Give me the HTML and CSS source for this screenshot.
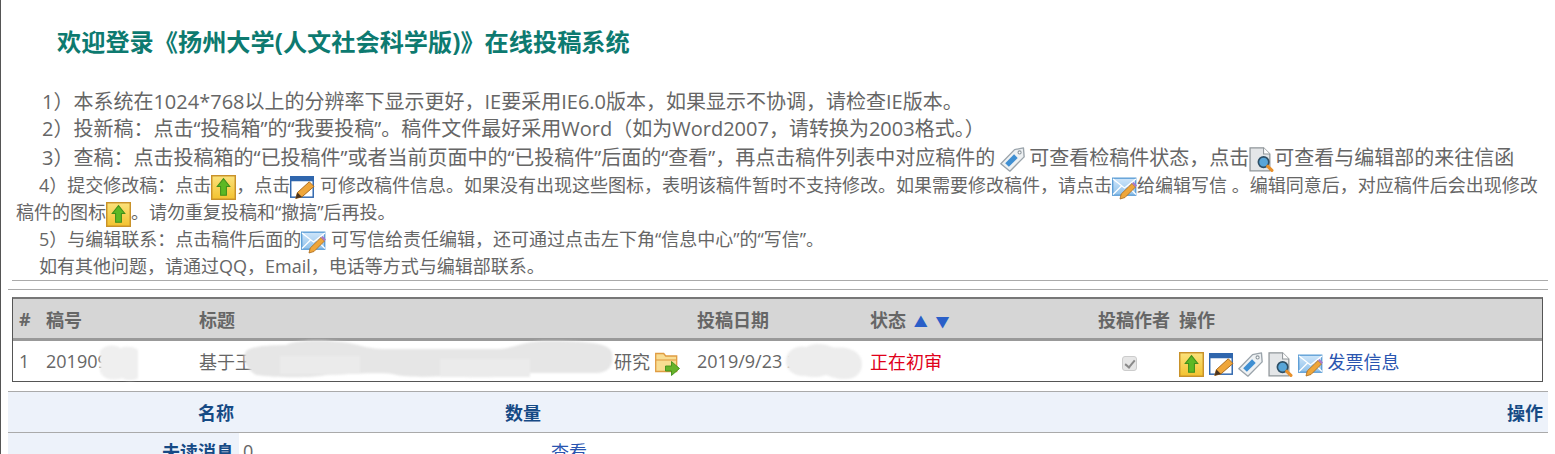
FILE: index.html
```html
<!DOCTYPE html>
<html lang="zh-CN">
<head>
<meta charset="UTF-8" />
<title>在线投稿系统</title>
<link rel="stylesheet" href="styles.css">
</head>
<body>
<svg class="defs" width="0" height="0">
  <defs>
    <linearGradient id="gold" x1="0" y1="0" x2="0" y2="1">
      <stop offset="0" stop-color="#fbe27c"/><stop offset="1" stop-color="#f3c22f"/>
    </linearGradient>
    <linearGradient id="sky" x1="0" y1="0" x2="0" y2="1">
      <stop offset="0" stop-color="#cfe6fa"/><stop offset="1" stop-color="#8fc1ea"/>
    </linearGradient>
    <symbol id="i-up" viewBox="0 0 24 24">
      <rect x="0.7" y="0.7" width="22.6" height="22.6" fill="url(#gold)" stroke="#c9922a" stroke-width="1.4"/>
      <path d="M12 3.5l6 7.5h-3.2v8.5H9.2V11H6z" fill="#5cb824" stroke="#3f8f1a" stroke-width="1"/>
    </symbol>
    <symbol id="i-edit" viewBox="0 0 24 24">
      <rect x="0.7" y="1.7" width="21.6" height="19.6" fill="#fff" stroke="#2f66ad" stroke-width="1.4"/>
      <rect x="0" y="1" width="23" height="5" fill="#2f66ad"/>
      <path d="M5.5 22.5l1.6-5.6L18.5 6.5l4.5 4.5L11.5 21z" fill="#efa63a" stroke="#a9691c" stroke-width="0.9"/>
      <path d="M5.5 22.5l1.6-5.6 4.4 4.100z" fill="#4a3420"/>
    </symbol>
    <symbol id="i-tag" viewBox="0 0 24 24">
      <path d="M0.8 16L14 2.500l8.500-1.700L23.200 9.500 9.500 23.200z" fill="#eef1f3" stroke="#9aa3aa" stroke-width="1.300" stroke-linejoin="round"/>
      <path d="M5 15.500L13.500 7l3.500 3.500-8.500 8.500z" fill="#3f8fd2"/>
      <circle cx="18.800" cy="5.200" r="1.500" fill="#fff" stroke="#8a949b"/>
    </symbol>
    <symbol id="i-doc" viewBox="0 0 24 24">
      <path d="M1 0.800h13l6 6v16H1z" fill="#e4e6e8" stroke="#8f9599" stroke-width="1.200"/>
      <path d="M14 0.800v6h6" fill="#fff" stroke="#8f9599"/>
      <circle cx="14" cy="14.500" r="5" fill="#58a5d8" stroke="#2d4f66" stroke-width="1.600"/>
      <path d="M18 18.500l4 4" stroke="#e8902a" stroke-width="3" stroke-linecap="round"/>
    </symbol>
    <symbol id="i-mail" viewBox="0 0 25 24">
      <rect x="0.700" y="2.700" width="23" height="17" fill="url(#sky)" stroke="#5f9fd6" stroke-width="1.400"/>
      <path d="M1 3.500l11.500 9 11.500-9M1 19l8.500-8.500M24 19l-8-8" fill="none" stroke="#fff" stroke-width="1.300"/>
      <path d="M8 23.500l1.200-5L20 8l3.500 3.500L13 22z" fill="#efa63a" stroke="#a9691c" stroke-width="0.800"/>
      <path d="M20 8l1.500-1.500L25 10l-1.500 1.500z" fill="#a878c8"/>
    </symbol>
    <symbol id="i-folder" viewBox="0 0 25 24">
      <path d="M0.700 1h8l2 2.500h11V19H0.700z" fill="#f9dd92" stroke="#e09c42" stroke-width="1.300"/>
      <path d="M0.700 7.500h21" stroke="#e09c42" stroke-width="1.100"/>
      <path d="M10.500 13.500h6V9l8 7-8 7v-4.500h-6z" fill="#66b32a" stroke="#3f8f1a" stroke-width="0.900"/>
    </symbol>
  </defs>
</svg>

<div class="page">
  <h1 class="welcome">欢迎登录《扬州大学(人文社会科学版)》在线投稿系统</h1>

  <div class="notes">
    <p class="note n-1">1）本系统在1024*768以上的分辨率下显示更好，IE要采用IE6.0版本，如果显示不协调，请检查IE版本。</p>
    <p class="note n-1">2）投新稿：点击“投稿箱”的“我要投稿”。稿件文件最好采用Word（如为Word2007，请转换为2003格式。）</p>
    <p class="note n-1 n-tall">3）查稿：点击投稿箱的“已投稿件”或者当前页面中的“已投稿件”后面的“查看”，再点击稿件列表中对应稿件的<svg class="ic ic-gap"><use href="#i-tag"/></svg>可查看检稿件状态，点击<svg class="ic"><use href="#i-doc"/></svg>可查看与编辑部的来往信函</p>
    <p class="note n-2 n-step">4）提交修改稿：点击<svg class="ic"><use href="#i-up"/></svg>，点击<svg class="ic"><use href="#i-edit"/></svg> 可修改稿件信息。如果没有出现这些图标，表明该稿件暂时不支持修改。如果需要修改稿件，请点击<svg class="ic"><use href="#i-mail"/></svg>给编辑写信 。编辑同意后，对应稿件后会出现修改稿件的图标<svg class="ic"><use href="#i-up"/></svg>。请勿重复投稿和“撤搞”后再投。</p>
    <p class="note n-2">5）与编辑联系：点击稿件后面的<svg class="ic"><use href="#i-mail"/></svg> 可写信给责任编辑，还可通过点击左下角“信息中心”的“写信”。</p>
    <p class="note n-2">如有其他问题，请通过QQ，Email，电话等方式与编辑部联系。</p>
  </div>

  <hr class="rule rule-short">
  <hr class="rule">

  <div class="papers-wrap">
    <table class="papers">
      <thead>
        <tr>
          <th class="c-num">#</th>
          <th class="c-id">稿号</th>
          <th class="c-title">标题</th>
          <th class="c-date">投稿日期</th>
          <th class="c-state">状态 <span class="sort">▲</span> <span class="sort">▼</span></th>
          <th class="c-author">投稿作者</th>
          <th>操作</th>
        </tr>
      </thead>
      <tbody>
        <tr>
          <td>1</td>
          <td>201909</td>
          <td><span class="hidden-part">基于王</span>研究 <svg class="ic"><use href="#i-folder"/></svg></td>
          <td>2019/9/23 2</td>
          <td class="state">正在初审</td>
          <td class="center"><input class="check" type="checkbox" checked disabled></td>
          <td class="actions">
            <svg class="ic"><use href="#i-up"/></svg>
            <svg class="ic"><use href="#i-edit"/></svg>
            <svg class="ic"><use href="#i-tag"/></svg>
            <svg class="ic"><use href="#i-doc"/></svg>
            <svg class="ic"><use href="#i-mail"/></svg>
            <a href="#">发票信息</a>
          </td>
        </tr>
      </tbody>
    </table>
    <!-- smudges over the row, coordinates are page pixels -->
    <svg class="smudges" viewBox="12 298 1531 86">
      <path d="M100 352c5-6 14-7 20-3 6-2 14-2 18 2v28c-4 3-12 3-16 0-8 3-18 2-22-6z" fill="#efefef"/>
      <path d="M246 352c6-5 24-6 40-6 10-6 50-6 72 0 16 5 30 4 50 4h90c16 0 22-8 50-8 40 0 62 2 64 12 2 14-4 20-18 20h-70c-14 5-50 5-76 3-16 1-40 2-56-2-20-2-50 1-66 1-12 3-50 3-70 0-12-8-14-18-10-24z" fill="#e6e6e6"/>
      <path d="M280 357h80v18h-80zM440 360h90v18h-90z" fill="#ebebeb"/>
      <path d="M786 362c0-10 10-16 20-14 6-4 18-4 26 0 4 1 10 0 14 1 10 2 16 8 16 16 0 10-8 16-18 15-8 0-12-2-18-4-4 2-14 3-20 1-12 1-20-6-20-15z" fill="#ededed"/>
    </svg>
  </div>

  <table class="msgs">
    <thead>
      <tr><th class="m-name">名称</th><th class="m-count">数量</th><th>操作</th></tr>
    </thead>
    <tbody>
      <tr><td class="m-label">未读消息</td><td class="m-num">0</td><td><a href="#">查看</a></td></tr>
    </tbody>
  </table>
</div>
</body>
</html>
```

FILE: styles.css
```css
html, body {
  margin: 0;
  height: 100%;
  overflow: hidden;
  background: #fff;
}
body {
  font-family: "Open Sans", "Noto Sans CJK SC", sans-serif;
  color: #666;
}
.defs {
  display: block;
  height: 0;
}
.page {
  height: 454px;
  overflow: hidden;
  border-left: 1px solid #555;
  padding: 0 7px 0 7px;
}
.welcome {
  margin: 0;
  padding: 26px 0 0 49px;
  font-size: 24.2px;
  line-height: 32px;
  color: #0d7a70;
}
.notes {
  margin-top: 30px;
  padding: 0 7px 0 8px;
  font-size: 20px;
}
.note {
  margin: 0;
  line-height: 27px;
}
.n-1 { text-indent: 26px; }
.n-2 {
  text-indent: 23px;
  font-size: 18px;
}
.n-tall { padding-top: 2px; }
.n-step { padding-top: 1px; }
.ic {
  width: 25px;
  height: 25px;
  vertical-align: middle;
  margin: -4px 0;
}
.ic-gap { margin: -4px 4px -4px 5px; }
.rule {
  margin: 0;
  height: 0;
  border: 0;
  border-top: 1px solid #aaa;
}
.rule-short {
  margin: 0 0 8px 4px;
}
.papers-wrap {
  position: relative;
  margin: 7px 5px 0 4px;
}
.smudges {
  position: absolute;
  left: 0;
  top: 0;
  width: 100%;
  height: 86px;
  filter: blur(1px);
}
.papers {
  width: 100%;
  table-layout: fixed;
  border-collapse: separate;
  border-spacing: 0;
  font-size: 18px;
  border: 1px solid #555;
  border-top: 2px solid #777;
  border-bottom: 1px solid #555;
}
.papers th {
  height: 39px;
  padding: 0 0 0 6px;
  background: #d6d6d6;
  border-bottom: 3px solid #999;
  text-align: left;
  font-weight: bold;
  white-space: nowrap;
}
.papers td {
  height: 40px;
  padding: 0 0 0 6px;
  white-space: nowrap;
}
.c-num { width: 21px; }
.c-id { width: 147px; }
.c-title { width: 492px; }
.c-date { width: 167px; }
.c-state { width: 222px; }
.c-author { width: 75px; }
.sort {
  margin-left: 3px;
  color: #2a5fc8;
  font-size: 14px;
}
.hidden-part {
  display: inline-block;
  width: 415px;
}
.state { color: #e0001a; }
.papers .center {
  padding-right: 12px;
  text-align: center;
}
.check {
  appearance: none;
  position: relative;
  margin: 0;
  width: 15px;
  height: 15px;
  vertical-align: middle;
  background: #e6e6e6;
  border: 1px solid #ccc;
  border-radius: 3px;
}
.check::after {
  content: "";
  position: absolute;
  left: 4px;
  top: 1px;
  width: 4px;
  height: 8px;
  border: solid #8a8a8a;
  border-width: 0 2px 2px 0;
  transform: rotate(40deg);
}
a {
  color: #2a55b0;
  text-decoration: none;
}
.msgs {
  width: 100%;
  margin-top: 9px;
  table-layout: fixed;
  border-collapse: collapse;
  font-size: 18px;
}
.msgs th {
  height: 40px;
  padding: 0 5px;
  background: #edf2fa;
  border-top: 1px solid #aaa;
  border-bottom: 1px solid #aaa;
  text-align: right;
  color: #164a85;
  font-weight: bold;
}
.m-name { width: 221px; }
.m-count { width: 297px; }
.msgs td {
  padding: 0 5px;
  height: 36px;
}
.msgs .m-num { padding-left: 4px; }
.msgs .m-label {
  background: #edf2fa;
  color: #164a85;
  font-weight: bold;
  text-align: right;
}
```
